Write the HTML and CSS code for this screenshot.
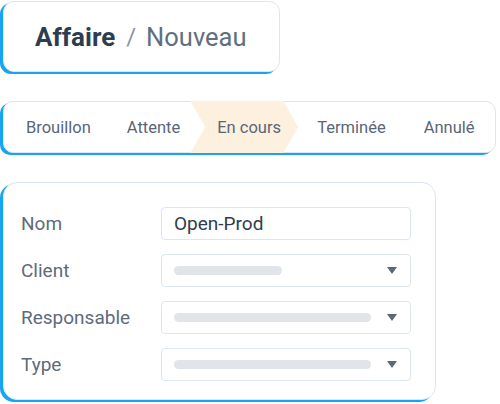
FILE: index.html
```html
<!DOCTYPE html>
<html lang="fr">
<head>
<meta charset="utf-8">
<link rel="stylesheet" href="styles.css">
</head>
<body>
<div class="page">
  <div class="card title-card">
    <span class="title-main">Affaire</span>
    <span class="title-sep">/</span>
    <span class="title-sub">Nouveau</span>
  </div>

  <div class="card stepper">
    <div class="step s1">Brouillon</div>
    <div class="step s2">Attente</div>
    <div class="step s3 active">En cours</div>
    <div class="step s4">Terminée</div>
    <div class="step s5">Annulé</div>
  </div>

  <div class="card form">
    <div class="row">
      <div class="label">Nom</div>
      <div class="field"><span class="value">Open-Prod</span></div>
    </div>
    <div class="row">
      <div class="label">Client</div>
      <div class="field select"><span class="ph short"></span><span class="caret"></span></div>
    </div>
    <div class="row">
      <div class="label">Responsable</div>
      <div class="field select"><span class="ph long"></span><span class="caret"></span></div>
    </div>
    <div class="row">
      <div class="label">Type</div>
      <div class="field select"><span class="ph long"></span><span class="caret"></span></div>
    </div>
  </div>
</div>
</body>
</html>
```

FILE: styles.css
```css
* { box-sizing: border-box; }
html, body { margin: 0; padding: 0; background: #ffffff; }
body {
  font-family: Roboto, "Liberation Sans", Arial, sans-serif;
  width: 500px;
  height: 404px;
  overflow: hidden;
}
.page {
  display: flex;
  flex-direction: column;
  align-items: flex-start;
  padding: 1px 0 0 3px;
}
.card {
  background: #ffffff;
  border: 1px solid #dde5ee;
  box-shadow: -3px 2px 0 #17a5f2;
}
.title-card {
  width: 277px;
  height: 71px;
  border-radius: 11px;
  display: flex;
  align-items: center;
  padding-left: 31px;
  font-size: 26px;
}
.title-main { font-weight: 700; color: #2d3d50; }
.title-sep { color: #8a96a3; margin: 0 10px 0 11px; font-size: 24px; }
.title-sub { color: #5f6f80; font-size: 25.5px; }

.stepper {
  margin-top: 29px;
  width: 493px;
  height: 52px;
  border-radius: 10px;
  display: flex;
  align-items: stretch;
  font-size: 16.5px;
  color: #5a6677;
}
.step {
  display: flex;
  align-items: center;
  white-space: nowrap;
}
.s1 { padding: 0 18px 0 22px; }
.s2 { padding: 0 10px 0 18px; }
.s3 {
  width: 108px;
  flex: none;
  padding-left: 27px;
  margin-top: -1px;
  margin-bottom: -1px;
  background: #fdf0de;
  clip-path: polygon(0 0, 93px 0, 108px 50%, 93px 100%, 0 100%, 15px 50%);
}
.s4 { padding: 0 19px 0 19px; }
.s5 { padding: 0 19px 0 19px; }

.form {
  margin-top: 29px;
  width: 433px;
  height: 218px;
  border-radius: 14px;
  padding: 24px 24px 0 17px;
  display: flex;
  flex-direction: column;
  gap: 14px;
}
.row {
  display: flex;
  align-items: center;
  height: 33px;
}
.label {
  width: 140px;
  font-size: 19px;
  color: #5d6b7b;
}
.field {
  width: 250px;
  height: 33px;
  border: 1px solid #dde5ee;
  border-radius: 4px;
  display: flex;
  align-items: center;
  padding: 0 13px 0 12px;
}
.value { font-size: 19px; color: #2e3d4f; }
.select { justify-content: space-between; }
.ph {
  height: 9px;
  border-radius: 5px;
  background: #e1e4e8;
}
.ph.short { width: 108px; }
.ph.long { width: 197px; }
.caret {
  width: 0;
  height: 0;
  border-left: 5.5px solid transparent;
  border-right: 5.5px solid transparent;
  border-top: 7px solid #5d6875;
  margin-left: auto;
}
```
